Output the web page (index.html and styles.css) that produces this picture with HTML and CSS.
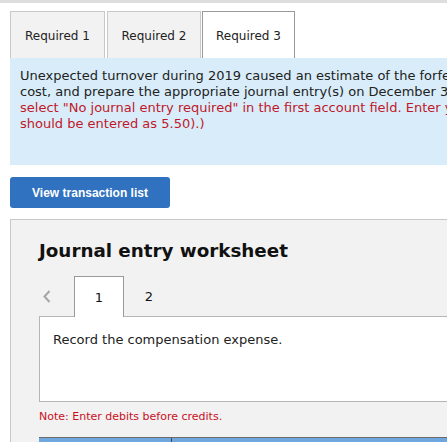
FILE: index.html
```html
<html>
<head>
  <title>Journal entry worksheet</title>
  <link rel="stylesheet" href="styles.css">
</head>
<body>
  <div class="topbar"></div>

  <!-- Question part tabs -->
  <div class="tabs">
    <div class="tab tab-1">Required 1</div>
    <div class="tab tab-2">Required 2</div>
    <div class="tab tab-3 active">Required 3</div>
  </div>

  <!-- Instructions for the current part -->
  <div class="question">
    <p>
      Unexpected turnover during 2019 caused an estimate of the forfeiture rate to be revised to 20%. Determine the compensation<br>
      cost, and prepare the appropriate journal entry(s) on December 31, 2019. <span class="warn">(If no entry is required for a transaction/event,</span><br>
      <span class="warn">select "No journal entry required" in the first account field. Enter your answers in millions (i.e., 5,500,000</span><br>
      <span class="warn">should be entered as 5.50).)</span>
    </p>
  </div>

  <button class="btn-list">View transaction list</button>

  <!-- Worksheet panel -->
  <div class="worksheet">
    <h2>Journal entry worksheet</h2>

    <div class="pager">
      <span class="pager-prev">
        <svg width="8" height="13" viewBox="0 0 8 13"><polyline points="6.5,1 1.5,6.5 6.5,12" fill="none" stroke="#a6a6a6" stroke-width="2"/></svg>
      </span>
      <span class="page current">1</span>
      <span class="page">2</span>
    </div>

    <div class="entry-box">
      <p>Record the compensation expense.</p>
    </div>

    <p class="note">Note: Enter debits before credits.</p>

    <div class="entry-table">
      <div class="col col-event"></div>
      <div class="col col-general"></div>
    </div>
  </div>
</body>
</html>
```

FILE: styles.css
```css
/* Page */
body {
  margin: 0;
  font-family: "DejaVu Sans", Verdana, sans-serif;
  color: #222;
  background: white;
  overflow: hidden;
  width: 447px;
}

.topbar {
  height: 3px;
  background: #dedede;
}

/* Tabs row */
.tabs {
  display: flex;
  gap: 2px;
  margin: 8px 0 0 10px;
}

.tab {
  height: 47px;
  box-sizing: border-box;
  border: 1px solid #c9c9c9;
  border-bottom: none;
  background: #f2f2f2;
  font-size: 12px;
  display: flex;
  align-items: center;
  justify-content: center;
  padding-top: 1px;
}

.tab-1 { width: 95px; }
.tab-2 { width: 94px; }
.tab-3 { width: 93px; margin-left: -1px; }

.tab.active {
  background: white;
  border-color: #9a9a9a;
}

/* Blue instruction panel */
.question {
  margin-left: 10px;
  width: 900px;
  height: 107px;
  box-sizing: border-box;
  padding: 10px 0 0 10px;
  background: #d8edf9;
}

.question p {
  margin: 0;
  font-size: 13px;
  line-height: 16px;
  white-space: nowrap;
}

.warn {
  color: #c0182a;
}

/* Transaction list button */
.btn-list {
  display: block;
  margin: 12px 0 0 10px;
  width: 160px;
  height: 31px;
  border: none;
  border-radius: 3px;
  background: #3071c0;
  color: white;
  font-family: "Liberation Sans", Arial, sans-serif;
  font-weight: bold;
  font-size: 12px;
  padding: 0;
}

/* Gray worksheet panel */
.worksheet {
  margin: 11px 0 0 10px;
  width: 900px;
  height: 300px;
  box-sizing: border-box;
  background: #f2f2f2;
  border: 1px solid #c8c8c8;
  padding: 19px 0 0 28px;
}

.worksheet h2 {
  margin: 0;
  font-size: 18.3px;
  line-height: 24px;
  font-weight: bold;
  color: #111;
}

/* Entry pager */
.pager {
  display: flex;
  align-items: center;
  height: 40px;
  margin-top: 13px;
}

.pager-prev {
  width: 35px;
  padding-left: 4px;
  box-sizing: border-box;
  display: flex;
  align-items: center;
}

.page {
  width: 50px;
  height: 40px;
  box-sizing: border-box;
  display: flex;
  align-items: center;
  justify-content: center;
  font-size: 13px;
  color: #111;
}

.page.current {
  background: white;
  border: 1px solid #9a9a9a;
  border-bottom: none;
  height: 41px;
  margin-bottom: -1px;
  position: relative;
  z-index: 1;
}

.entry-box {
  height: 86px;
  box-sizing: border-box;
  background: white;
  border: 1px solid #b5b5b5;
  padding: 15px 0 0 13px;
}

.entry-box p {
  margin: 0;
  font-size: 13px;
  line-height: 16px;
}

.note {
  margin: 8px 0 0;
  font-size: 11px;
  line-height: 14px;
  color: #c8101e;
}

/* Entry table header */
.entry-table {
  display: flex;
  margin-top: 13px;
  height: 20px;
  border-top: 1px solid #6c6c6c;
}

.col {
  background: #6fa6de;
}

.col-event {
  width: 132px;
  border-right: 1px solid #444;
}

.col-general {
  flex: 1;
}
```
